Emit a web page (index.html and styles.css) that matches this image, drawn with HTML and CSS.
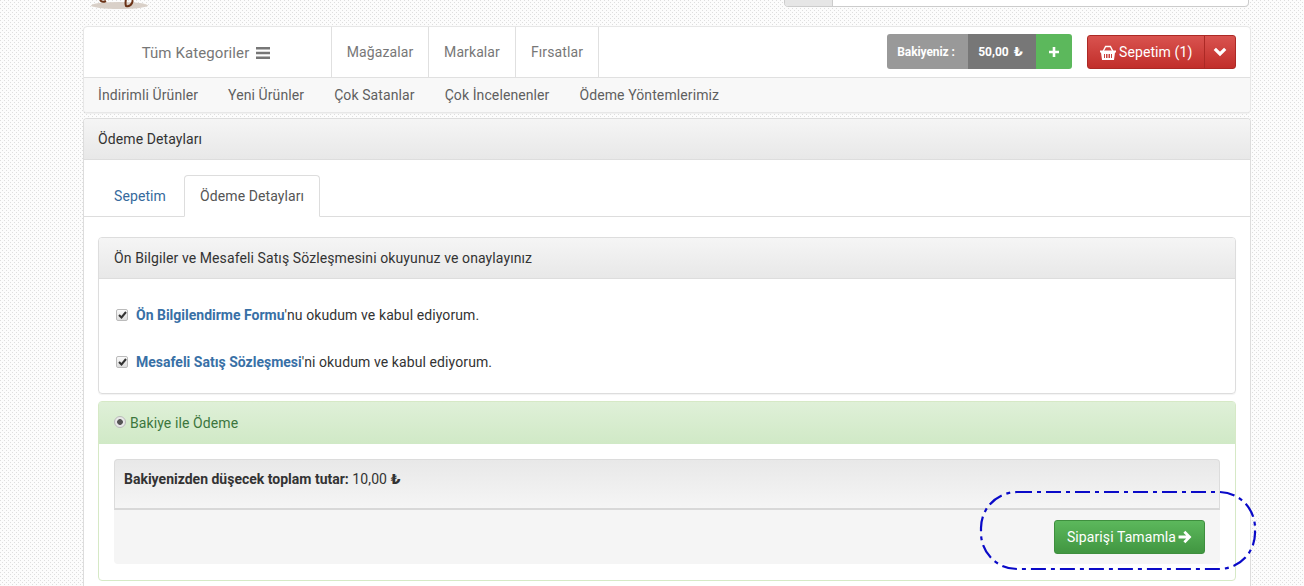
FILE: index.html
```html
<!DOCTYPE html>
<html lang="tr">
<head>
<meta charset="utf-8">
<title>Ödeme Detayları</title>
<link rel="stylesheet" href="styles.css">
</head>
<body>
<div class="page">
  <header class="top">
    <svg class="logo" width="60" height="10" viewBox="0 0 60 10">
      <ellipse cx="28.500" cy="5.500" rx="28.500" ry="3.500" fill="#d9d0c8"/>
      <path d="M9 0q2 3 6 1M35 0q-1 3 0 6 4 1 6-3 1-2 0-3" fill="none" stroke="#6b3216" stroke-width="2"/>
    </svg>
    <div class="search"><span class="search-addon"></span><span class="search-input"></span></div>
  </header>

  <nav class="navbar">
    <div class="nav-main">
      <a class="cats">Tüm Kategoriler
        <svg class="bars" width="14" height="12" viewBox="0 0 14 12"><path d="M0 0h14v2.600H0zM0 4.700h14v2.600H0zM0 9.400h14V12H0z" fill="#777"/></svg>
      </a>
      <a class="nav-item nav-stores">Mağazalar</a>
      <a class="nav-item nav-brands">Markalar</a>
      <a class="nav-item nav-deals">Fırsatlar</a>
      <div class="balance">
        <span class="bal-label">Bakiyeniz :</span>
        <span class="bal-value">50,00 <span class="lira">₺</span></span>
        <span class="bal-add"><svg width="10" height="10" viewBox="0 0 10 10"><path d="M3.700 0h2.600v3.700H10v2.600H6.300V10H3.700V6.300H0V3.700h3.700z" fill="#fff"/></svg></span>
      </div>
      <div class="cart">
        <span class="cart-main">
          <svg width="16" height="15" viewBox="0 0 16 15"><path d="M3 6.500 5.600 1.500h4.800L13 6.500" fill="none" stroke="#fff" stroke-width="1.400"/><path d="M0 5.600h16v2H15L14 15H2L1 7.600H0z" fill="#fff"/><path d="M4.500 9v4M6.500 9v4M8 9v4M9.500 9v4M11.500 9v4" stroke="#c9413d" stroke-width="1"/></svg>
          Sepetim (1)
        </span>
        <span class="cart-toggle"><svg width="14" height="10" viewBox="0 0 14 10"><path d="M1.800 1.800 7 7l5.200-5.200" fill="none" stroke="#fff" stroke-width="3.200"/></svg></span>
      </div>
    </div>
    <div class="nav-sub">
      <a>İndirimli Ürünler</a>
      <a>Yeni Ürünler</a>
      <a>Çok Satanlar</a>
      <a>Çok İncelenenler</a>
      <a>Ödeme Yöntemlerimiz</a>
    </div>
  </nav>

  <section class="panel">
    <div class="panel-title">Ödeme Detayları</div>
    <div class="tabs">
      <a class="tab">Sepetim</a>
      <a class="tab tab-active">Ödeme Detayları</a>
    </div>
    <div class="content">
      <div class="box">
        <div class="box-head">Ön Bilgiler ve Mesafeli Satış Sözleşmesini okuyunuz ve onaylayınız</div>
        <div class="box-body">
          <label class="check-row">
            <span class="check"><svg width="9" height="8" viewBox="0 0 9 8"><path d="M1 4 3.500 6.500 8 1" fill="none" stroke="#333" stroke-width="2"/></svg></span>
            <span><b class="link">Ön Bilgilendirme Formu</b>'nu okudum ve kabul ediyorum.</span>
          </label>
          <label class="check-row">
            <span class="check"><svg width="9" height="8" viewBox="0 0 9 8"><path d="M1 4 3.500 6.500 8 1" fill="none" stroke="#333" stroke-width="2"/></svg></span>
            <span><b class="link">Mesafeli Satış Sözleşmesi</b>'ni okudum ve kabul ediyorum.</span>
          </label>
        </div>
      </div>

      <div class="pay">
        <div class="pay-head"><span class="radio"></span>Bakiye ile Ödeme</div>
        <div class="pay-body">
          <div class="well"><b>Bakiyenizden düşecek toplam tutar:</b> 10,00 <span class="lira-dark">₺</span></div>
          <div class="actions">
            <a class="btn-finish">Siparişi Tamamla
              <svg width="14" height="14" viewBox="0 0 13 13"><path d="M6.800.8 12.500 6.500 6.800 12.200 5 10.400 7.600 7.900H.5V5.100h7.100L5 2.600z" fill="#fff"/></svg>
            </a>
          </div>
        </div>
      </div>
    </div>
  </section>
</div>
<svg class="annotation" width="279" height="83" viewBox="0 0 279 83">
  <rect x="2" y="2" width="274" height="77" rx="36" ry="36" fill="none" stroke="#0a0ac8" stroke-width="2.200" stroke-dasharray="15 5 4 5"/>
</svg>
</body>
</html>
```
FILE: styles.css
```css
* { box-sizing: border-box; }
html, body { margin: 0; height: 586px; overflow: hidden; }
body {
  font-family: Roboto, "Liberation Sans", sans-serif;
  font-size: 14px;
  letter-spacing: .1px;
  color: #333;
  background-color: #fcfcfc;
  background-image: radial-gradient(circle at .5px .5px, #dedede .7px, transparent .71px), radial-gradient(circle at 2.500px 2.500px, #dedede .7px, transparent .71px);
  background-size: 4px 4px;
  position: relative;
}
b { letter-spacing: 0; }
.page { width: 1168px; margin-left: 83px; }

.top { height: 26px; display: flex; justify-content: space-between; align-items: flex-end; padding: 0 2px 19px 8px; }
.logo { display: block; align-self: flex-start; }
.search { width: 465px; height: 34px; display: flex; flex: none; border: 1px solid #ccc; border-radius: 0 0 4px 4px; background: #fff; overflow: hidden; }
.search-addon { width: 48px; background: #e6e6e6; border-right: 1px solid #ccc; }
.search-input { flex: 1; }

.navbar { height: 87px; border: 1px solid #e7e7e7; border-radius: 4px; background: #fff; box-shadow: 0 1px 1px rgba(0,0,0,.05); overflow: hidden; }
.nav-main { height: 51px; display: flex; align-items: stretch; border-bottom: 1px solid #e0e0e0; color: #777; }
.cats { width: 248px; border-right: 1px solid #e0e0e0; display: flex; align-items: center; justify-content: center; gap: 7px; font-size: 15px; padding: 1px 3px 0 0; }
.nav-item { display: flex; align-items: center; justify-content: center; border-right: 1px solid #e0e0e0; }
.nav-stores { width: 97px; }
.nav-brands { width: 87px; }
.nav-deals { width: 83px; }

.balance { margin: 7px 0 7px auto; height: 35px; display: flex; color: #fff; font-size: 12px; font-weight: 700; letter-spacing: 0; border-radius: 3px; overflow: hidden; align-self: flex-start; }
.bal-label { width: 81px; background: #999; display: flex; align-items: center; justify-content: center; letter-spacing: -.1px; padding-right: 3px; }
.bal-value { width: 68px; background: #777; display: flex; align-items: center; justify-content: center; gap: 5px; padding-right: 3px; }
.lira { font-family: "DejaVu Sans", sans-serif; font-size: 13px; }
.bal-add { width: 36px; background: #5cb85c; display: flex; align-items: center; justify-content: center; }

.cart { margin: 8px 14px 0 15px; width: 149px; height: 34px; display: flex; color: #fff; border: 1px solid #ac2925; border-radius: 3px; background: linear-gradient(#d9534f, #c12e2a); overflow: hidden; }
.cart-main { flex: 1; display: flex; align-items: center; gap: 3px; padding-left: 12px; border-right: 1px solid #ac2925; }
.cart-toggle { width: 30px; display: flex; align-items: center; justify-content: center; }

.nav-sub { height: 34px; display: flex; align-items: center; gap: 30px; padding-left: 14px; background: #f8f8f8; color: #5f5f5f; }

.panel { margin-top: 5px; height: 480px; background: #fff; border: 1px solid #ddd; border-bottom: 0; border-radius: 4px 4px 0 0; }
.panel-title { height: 41px; padding-left: 14px; display: flex; align-items: center; background: linear-gradient(#f5f5f5, #e8e8e8); border-bottom: 1px solid #ddd; border-radius: 3px 3px 0 0; }

.tabs { margin-top: 15px; height: 42px; display: flex; padding-left: 14px; border-bottom: 1px solid #ddd; }
.tab { height: 42px; padding: 0 15px; display: flex; align-items: center; white-space: nowrap; color: #36699c; border: 1px solid transparent; margin-right: 2px; width: 84px; }
.tab-active { width: 136px; color: #555; background: #fff; border-color: #ddd #ddd #fff; border-radius: 4px 4px 0 0; }

.content { padding: 20px 14px 0; }
.box { height: 157px; border: 1px solid #ddd; border-radius: 4px; box-shadow: 0 1px 1px rgba(0,0,0,.05); }
.box-head { height: 41px; padding-left: 15px; display: flex; align-items: center; background: linear-gradient(#f5f5f5, #e8e8e8); border-bottom: 1px solid #ddd; border-radius: 3px 3px 0 0; }
.box-body { padding: 24px 0 0 17px; display: flex; flex-direction: column; gap: 23px; }
.check-row { height: 24px; display: flex; align-items: center; gap: 8px; }
.check { width: 12px; height: 12px; display: flex; align-items: center; justify-content: center; border: 1px solid #bbb; border-radius: 2px; background: linear-gradient(#fafafa, #ddd); }
.link { color: #3870a6; font-weight: 700; }

.pay { margin-top: 7px; height: 180px; border: 1px solid #d6e9c6; border-radius: 4px; }
.pay-head { height: 42px; padding-left: 15px; display: flex; align-items: center; gap: 4px; color: #3c763d; background: linear-gradient(#dff0d8, #d0e9c6); }
.radio { width: 12px; height: 12px; margin-top: -3px; border-radius: 50%; border: 1px solid #bbb; background: radial-gradient(circle, #555 0 2.500px, #e8e8e8 3.200px); }
.pay-body { padding: 15px 15px 0; }
.well { height: 51px; padding: 11px 9px; background: linear-gradient(#e8e8e8, #f5f5f5); border: 1px solid #dcdcdc; border-bottom: 2px solid #d8d8d8; border-radius: 4px 4px 0 0; }
.lira-dark { font-family: "DejaVu Sans", sans-serif; font-size: 14px; font-weight: 700; }
.actions { height: 54px; display: flex; align-items: flex-start; justify-content: flex-end; padding: 10px 15px 0 0; background: #f5f5f5; border-radius: 0 0 4px 4px; }
.btn-finish { width: 151px; height: 34px; display: flex; align-items: center; justify-content: center; gap: 2px; color: #fff; border: 1px solid #3e8f3e; border-radius: 3px; background: linear-gradient(#5cb85c, #419641); }

.annotation { position: absolute; left: 979px; top: 490px; }
```
